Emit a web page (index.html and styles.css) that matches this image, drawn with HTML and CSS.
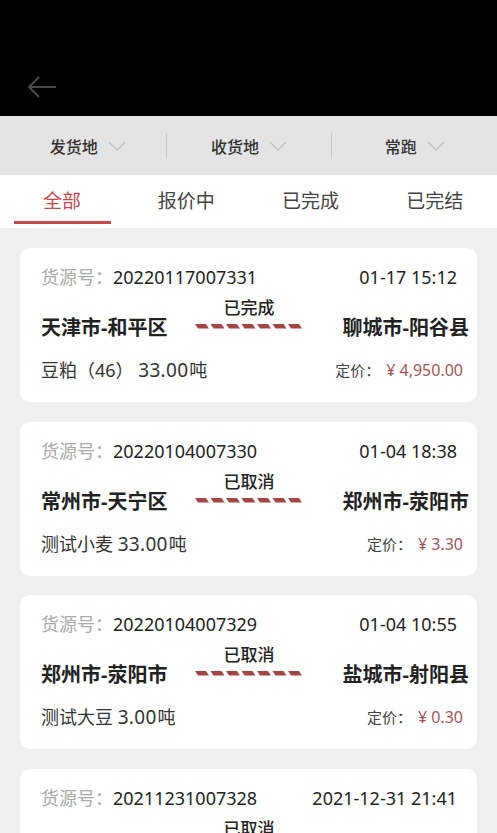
FILE: index.html
```html
<!DOCTYPE html>
<html lang="zh-CN">
<head>
  <meta charset="UTF-8" />
  <meta name="viewport" content="width=device-width, initial-scale=1.0" />
  <title>货源列表</title>
  <link rel="stylesheet" href="styles.css">
</head>
<body>
  <header class="topbar">
    <svg class="back" width="30" height="22" viewBox="0 0 30 22">
      <path d="M29 11H2M12 1L2 11l10 10" fill="none" stroke="#4a4a4a" stroke-width="2"/>
    </svg>
  </header>

  <div class="filters">
    <div class="filter">发货地 <svg class="chev" width="18" height="10" viewBox="0 0 18 10"><path d="M1 1l8 8 8-8" fill="none" stroke="#c4c4c4" stroke-width="1.6"/></svg></div>
    <div class="filter">收货地 <svg class="chev" width="18" height="10" viewBox="0 0 18 10"><path d="M1 1l8 8 8-8" fill="none" stroke="#c4c4c4" stroke-width="1.6"/></svg></div>
    <div class="filter">常跑 <svg class="chev" width="18" height="10" viewBox="0 0 18 10"><path d="M1 1l8 8 8-8" fill="none" stroke="#c4c4c4" stroke-width="1.6"/></svg></div>
  </div>

  <nav class="tabs">
    <div class="tab active">全部</div>
    <div class="tab">报价中</div>
    <div class="tab">已完成</div>
    <div class="tab">已完结</div>
  </nav>

  <main class="list">
    <div class="card">
      <div class="row top">
        <span><span class="label">货源号：</span>20220117007331</span>
        <span>01-17 15:12</span>
      </div>
      <div class="route">
        <span class="city">天津市-和平区</span>
        <div class="mid">
          <div class="status">已完成</div>
          <svg class="dashes" width="108" height="5" viewBox="0 0 108 5"><path d="M0 0h11l3 4.5H3zM15.5 0h11l3 4.5h-11zM31 0h11l3 4.5h-11zM46.5 0h11l3 4.5h-11zM62 0h11l3 4.5h-11zM77.5 0h11l3 4.5h-11zM93 0h11l3 4.5h-11z" fill="#a54646"/></svg>
        </div>
        <span class="city end">聊城市-阳谷县</span>
      </div>
      <div class="row bottom">
        <span>豆粕（46） <span class="num">33.00</span>吨</span>
        <span class="price"><span class="plabel">定价：</span>¥ 4,950.00</span>
      </div>
    </div>

    <div class="card">
      <div class="row top">
        <span><span class="label">货源号：</span>20220104007330</span>
        <span>01-04 18:38</span>
      </div>
      <div class="route">
        <span class="city">常州市-天宁区</span>
        <div class="mid">
          <div class="status">已取消</div>
          <svg class="dashes" width="108" height="5" viewBox="0 0 108 5"><path d="M0 0h11l3 4.5H3zM15.5 0h11l3 4.5h-11zM31 0h11l3 4.5h-11zM46.5 0h11l3 4.5h-11zM62 0h11l3 4.5h-11zM77.5 0h11l3 4.5h-11zM93 0h11l3 4.5h-11z" fill="#a54646"/></svg>
        </div>
        <span class="city end">郑州市-荥阳市</span>
      </div>
      <div class="row bottom">
        <span>测试小麦 <span class="num">33.00</span>吨</span>
        <span class="price"><span class="plabel">定价：</span>¥ 3.30</span>
      </div>
    </div>

    <div class="card">
      <div class="row top">
        <span><span class="label">货源号：</span>20220104007329</span>
        <span>01-04 10:55</span>
      </div>
      <div class="route">
        <span class="city">郑州市-荥阳市</span>
        <div class="mid">
          <div class="status">已取消</div>
          <svg class="dashes" width="108" height="5" viewBox="0 0 108 5"><path d="M0 0h11l3 4.5H3zM15.5 0h11l3 4.5h-11zM31 0h11l3 4.5h-11zM46.5 0h11l3 4.5h-11zM62 0h11l3 4.5h-11zM77.5 0h11l3 4.5h-11zM93 0h11l3 4.5h-11z" fill="#a54646"/></svg>
        </div>
        <span class="city end">盐城市-射阳县</span>
      </div>
      <div class="row bottom">
        <span>测试大豆 <span class="num">3.00</span>吨</span>
        <span class="price"><span class="plabel">定价：</span>¥ 0.30</span>
      </div>
    </div>

    <div class="card">
      <div class="row top">
        <span><span class="label">货源号：</span>20211231007328</span>
        <span>2021-12-31 21:41</span>
      </div>
      <div class="route">
        <span class="city">郑州市-荥阳市</span>
        <div class="mid">
          <div class="status">已取消</div>
          <svg class="dashes" width="108" height="5" viewBox="0 0 108 5"><path d="M0 0h11l3 4.5H3zM15.5 0h11l3 4.5h-11zM31 0h11l3 4.5h-11zM46.5 0h11l3 4.5h-11zM62 0h11l3 4.5h-11zM77.5 0h11l3 4.5h-11zM93 0h11l3 4.5h-11z" fill="#a54646"/></svg>
        </div>
        <span class="city end">郑州市-荥阳市</span>
      </div>
      <div class="row bottom">
        <span>测试玉米 <span class="num">3.00</span>吨</span>
        <span class="price"><span class="plabel">定价：</span>¥ 0.30</span>
      </div>
    </div>
  </main>
</body>
</html>
```

FILE: styles.css
```css
body {
  margin: 0;
  font-family: "Noto Sans", "Noto Sans CJK SC", sans-serif;
  background: #efefef;
  color: #222;
  height: 833px;
  overflow: hidden;
}
.topbar {
  height: 116px;
  background: #000;
  display: flex;
  align-items: flex-end;
  padding: 0 0 18px 27px;
  box-sizing: border-box;
}
.filters {
  height: 59px;
  background: #e4e4e4;
  display: grid;
  grid-template-columns: 1fr 1fr 1fr;
  align-items: center;
}
.filter {
  display: flex;
  justify-content: center;
  align-items: center;
  gap: 10px;
  font-size: 16px;
  font-weight: 500;
  color: #333;
  height: 26px;
  border-left: 1px solid #c9c9c9;
}
.filter:first-child {
  border-left: none;
  padding-left: 10px;
}
.chev {
  margin-top: 1px;
}
.tabs {
  height: 53px;
  background: #fff;
  display: grid;
  grid-template-columns: repeat(4, 1fr);
}
.tab {
  font-size: 19px;
  color: #444;
  text-align: center;
  line-height: 52px;
  position: relative;
}
.tab.active {
  color: #c8484a;
}
.tab.active::after {
  content: "";
  position: absolute;
  left: 14px;
  right: 13px;
  bottom: 4px;
  height: 3px;
  background: #c8484a;
}
.list {
  padding: 20px 20px 0;
  display: flex;
  flex-direction: column;
  gap: 19.5px;
}
.card {
  background: #fff;
  border-radius: 10px;
  padding: 16px 20px 21px 21px;
  height: 154px;
  box-sizing: border-box;
  flex-shrink: 0;
}
.row {
  display: flex;
  justify-content: space-between;
}
.top {
  font-size: 18px;
  line-height: 26px;
  color: #222;
}
.label {
  color: #aaa;
}
.route {
  margin-top: 8px;
  margin-right: -12px;
  display: grid;
  grid-template-columns: 1fr auto 1fr;
  align-items: end;
}
.city {
  font-size: 20px;
  font-weight: bold;
  line-height: 28px;
  white-space: nowrap;
}
.city.end {
  text-align: right;
}
.mid {
  display: flex;
  flex-direction: column;
  align-items: center;
  padding-bottom: 13px;
  margin-right: 12px;
}
.status {
  font-size: 17px;
  font-weight: 500;
  line-height: 20px;
  color: #222;
}
.dashes {
  display: block;
  margin-top: 6px;
}
.bottom {
  margin-top: 16px;
  font-size: 18px;
  line-height: 24px;
  color: #333;
  margin-right: -6px;
}
.num {
  font-size: 19px;
  letter-spacing: 0.3px;
  margin-right: 1px;
}
.price {
  font-size: 16px;
  color: #a35458;
}
.plabel {
  font-size: 15px;
  color: #444;
  margin-right: 6px;
}
```
